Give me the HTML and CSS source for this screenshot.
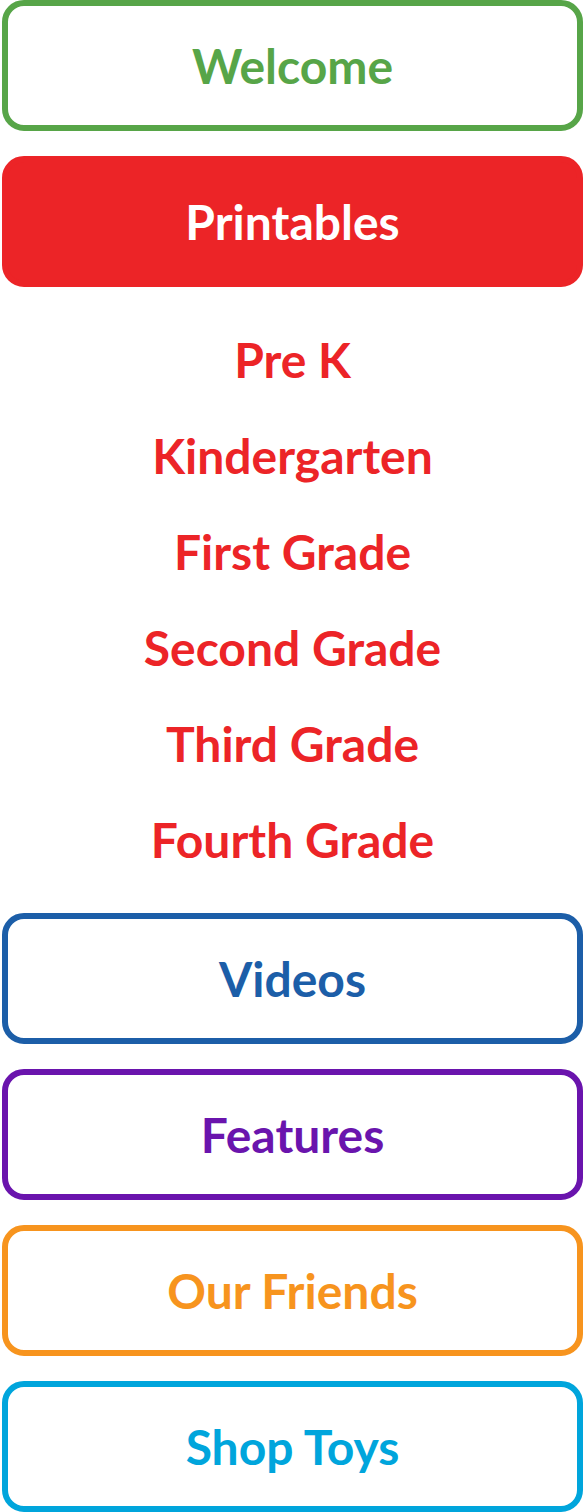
FILE: index.html
```html
<!DOCTYPE html>
<html>
<head>
    <title>Menu</title>
    <link rel="stylesheet" href="styles.css">
</head>
<body>
    <nav class="menu">
        <a class="menu-item green" href="#">Welcome</a>
        <a class="menu-item red active" href="#">Printables</a>
        <ul class="submenu">
            <li><a href="#">Pre K</a></li>
            <li><a href="#">Kindergarten</a></li>
            <li><a href="#">First Grade</a></li>
            <li><a href="#">Second Grade</a></li>
            <li><a href="#">Third Grade</a></li>
            <li><a href="#">Fourth Grade</a></li>
        </ul>
        <a class="menu-item blue" href="#">Videos</a>
        <a class="menu-item purple" href="#">Features</a>
        <a class="menu-item orange" href="#">Our Friends</a>
        <a class="menu-item cyan" href="#">Shop Toys</a>
    </nav>
</body>
</html>
```

FILE: styles.css
```css
body {
    font-family: 'Lato', 'Liberation Sans', sans-serif;
    font-weight: 700;
    background-color: #fff;
    margin: 0;
    padding: 0;
}

.menu {
    display: flex;
    flex-direction: column;
    gap: 25px;
    padding-left: 2px;
}

.menu-item {
    display: flex;
    justify-content: center;
    align-items: center;
    box-sizing: border-box;
    height: 131px;
    border: 6px solid currentColor;
    border-radius: 22px;
    font-size: 48px;
    text-decoration: none;
    background-color: #fff;
}

.green { color: #57a548; }
.red { color: #ec2427; }
.blue { color: #1c5ea8; }
.purple { color: #6a14ad; }
.orange { color: #f7941e; }
.cyan { color: #00a5dc; }

.menu-item.active {
    background-color: #ec2427;
    border-color: #ec2427;
    color: #fff;
}

.submenu {
    list-style: none;
    margin: 0;
    padding: 0;
    text-align: center;
}

.submenu li {
    line-height: 96px;
    font-size: 48px;
}

.submenu a {
    color: #ec2427;
    text-decoration: none;
}
```
